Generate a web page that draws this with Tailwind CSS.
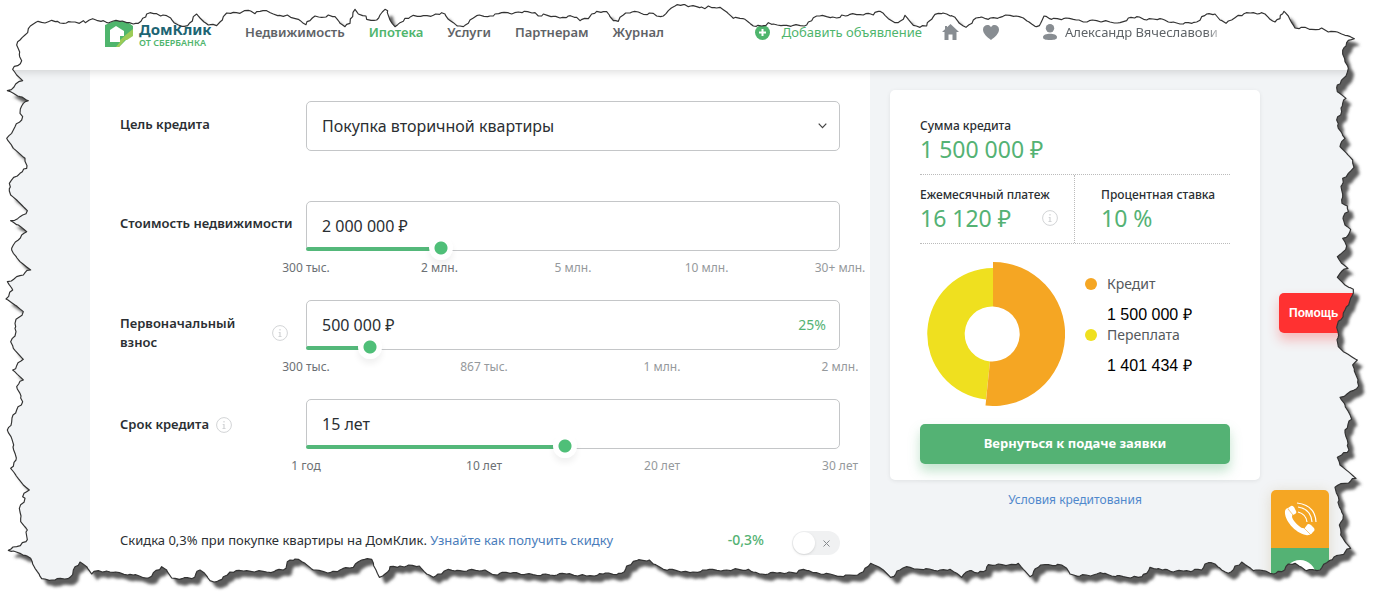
<!DOCTYPE html>
<html lang="ru">
<head>
<meta charset="utf-8">
<meta name="viewport" content="width=device-width, initial-scale=1">
<title>ДомКлик — Ипотечный калькулятор</title>
<script src="https://cdn.jsdelivr.net/npm/@tailwindcss/browser@4"></script>
</head>
<body class="relative min-h-screen overflow-hidden bg-[#f2f4f6] font-['Noto_Sans','Open_Sans',sans-serif] text-sm text-[#2b2f33]">

<header class="relative z-10 flex h-[70px] items-start bg-white pt-[22px] pr-[156px] pl-[105px] shadow-[0_2px_8px_rgba(0,0,0,0.14)]">
  <a href="#" class="-mt-px flex w-[140px] gap-[6px]" aria-label="ДомКлик от Сбербанка">
    <svg class="h-[27px] w-7" viewBox="0 0 28 27" aria-hidden="true">
      <path d="M0 4 9 0H21L28 5V14L22 18 14 26H0Z" fill="#4fb56d"/>
      <path d="M28 8V15L22 19 20 19 14 26H11L15 21V19L23 12Z" fill="#9ccb57"/>
      <path d="M5 21V9L11 5L19 10V15H15V21Z" fill="#fff"/>
    </svg>
    <span class="flex flex-col">
      <span class="text-[15px] leading-[16px] font-bold text-[#1d6473]">ДомКлик</span>
      <span class="pt-px text-[9px] leading-[10px] font-semibold whitespace-nowrap text-[#4fb56d]">ОТ СБЕРБАНКА</span>
    </span>
  </a>
  <nav class="flex gap-6 text-[13px] leading-5 font-semibold text-[#5f6367]">
    <a href="#">Недвижимость</a>
    <a href="#" class="text-[#4fb56d]">Ипотека</a>
    <a href="#">Услуги</a>
    <a href="#">Партнерам</a>
    <a href="#">Журнал</a>
  </nav>
  <div class="ml-auto flex items-center text-[13px] leading-5 text-[#5f6468]">
    <a href="#" class="flex items-center gap-3 text-[#4fb56d]">
      <svg class="size-[15px]" viewBox="0 0 15 15" aria-hidden="true"><circle cx="7.500" cy="7.500" r="7.500" fill="#4fb56d"/><path d="M7.500 4v7M4 7.500h7" stroke="#fff" stroke-width="2"/></svg>
      Добавить объявление
    </a>
    <a href="#" class="ml-5" aria-label="Главная"><svg class="h-4 w-[17px]" viewBox="0 0 17 16"><path d="M8.500 0 17 8H14.500V16H10.500V10.500H6.500V16H2.500V8H0L3 5.200V2H5V3.300Z" fill="#888d92"/></svg></a>
    <a href="#" class="ml-6" aria-label="Избранное"><svg class="h-[15px] w-4" viewBox="0 0 16 15"><path d="M8 15C4 12 0 8.500 0 4.500C0 0 6-1.500 8 2.200C10-1.500 16 0 16 4.500C16 8.500 12 12 8 15Z" fill="#888d92"/></svg></a>
    <a href="#" class="ml-11 flex items-center gap-2">
      <svg class="h-4 w-[14px]" viewBox="0 0 14 16" aria-hidden="true"><circle cx="7" cy="4.200" r="4.200" fill="#888d92"/><path d="M0 13C0 8.500 14 8.500 14 13C14 15.200 12 16 7 16S0 15.200 0 13Z" fill="#888d92"/></svg>
      <span class="w-40 whitespace-nowrap [mask-image:linear-gradient(to_right,#000_88%,transparent)]">Александр Вячеславови</span>
    </a>
  </div>
</header>

<main class="flex items-start gap-5 pr-[121px] pl-[90px]">
  <form class="min-w-0 flex-1 bg-white px-[30px] pt-[31px] pb-8">
    <div class="mb-[50px] flex h-[50px] items-center">
      <label for="goal" class="w-[186px] shrink-0 pb-[3px] text-[13px] font-semibold">Цель кредита</label>
      <div class="relative flex-1">
        <select id="goal" class="h-[50px] w-full appearance-none rounded-[5px] border border-[#c4c6c8] bg-white px-[15px] text-base">
          <option>Покупка вторичной квартиры</option>
        </select>
        <svg class="pointer-events-none absolute top-[22px] right-[13px] h-[6px] w-[9px]" viewBox="0 0 9 6" aria-hidden="true"><path d="M.7.700 4.500 4.700 8.300.700" fill="none" stroke="#444" stroke-width="1.200"/></svg>
      </div>
    </div>

    <div class="flex items-start">
      <label for="price" class="w-[186px] shrink-0 pt-[13px] text-[13px] leading-[19px] font-semibold whitespace-nowrap">Стоимость недвижимости</label>
      <div class="min-w-0 flex-1">
        <div class="relative">
          <input id="price" type="text" value="2 000 000 ₽" class="h-[50px] w-full rounded-[5px] border border-[#c4c6c8] bg-white px-[15px] text-base">
          <div class="absolute bottom-0 left-0 h-1 rounded-sm bg-[#54b87a]" style="width:25.3%"></div>
          <input type="range" min="0" max="100" step="any" value="25.3" aria-label="Стоимость недвижимости" class="absolute -right-3 -bottom-[9px] -left-3 h-6 appearance-none bg-transparent [&::-webkit-slider-thumb]:size-6 [&::-webkit-slider-thumb]:appearance-none [&::-webkit-slider-thumb]:rounded-full [&::-webkit-slider-thumb]:bg-[radial-gradient(circle,#4fbf78_6px,#fff_7px)] [&::-webkit-slider-thumb]:shadow-[0_5px_6px_rgba(0,0,0,0.06)]">
        </div>
        <div class="mt-[7px] mb-[22px] flex h-5 justify-between text-xs leading-5 text-[#95999c]">
          <span class="flex w-0 justify-center whitespace-nowrap text-[#6c7074]">300 тыс.</span>
          <span class="flex w-0 justify-center whitespace-nowrap text-[#6c7074]">2 млн.</span>
          <span class="flex w-0 justify-center whitespace-nowrap">5 млн.</span>
          <span class="flex w-0 justify-center whitespace-nowrap">10 млн.</span>
          <span class="flex w-0 justify-center whitespace-nowrap">30+ млн.</span>
        </div>
      </div>
    </div>

    <div class="flex items-start">
      <div class="flex w-[186px] shrink-0 items-center justify-between pt-[14px] pr-[18px]">
        <label for="down" class="text-[13px] leading-[19px] font-semibold">Первоначальный<br>взнос</label>
        <button type="button" aria-label="Подсказка о взносе"><svg class="size-4" viewBox="0 0 16 16"><circle cx="8" cy="8" r="7.400" fill="none" stroke="#d2d4d6"/><path d="M8 4v1.500M6.700 7.500H8V11.500M6.500 11.500h3" fill="none" stroke="#d2d4d6" stroke-width="1.200"/></svg></button>
      </div>
      <div class="min-w-0 flex-1">
        <div class="relative">
          <input id="down" type="text" value="500 000 ₽" class="h-[50px] w-full rounded-[5px] border border-[#c4c6c8] bg-white px-[15px] text-base">
          <span class="absolute top-[15px] right-[14px] leading-5 text-[#54b274]">25%</span>
          <div class="absolute bottom-0 left-0 h-1 rounded-sm bg-[#54b87a]" style="width:12%"></div>
          <input type="range" min="0" max="100" step="any" value="12" aria-label="Первоначальный взнос" class="absolute -right-3 -bottom-[9px] -left-3 h-6 appearance-none bg-transparent [&::-webkit-slider-thumb]:size-6 [&::-webkit-slider-thumb]:appearance-none [&::-webkit-slider-thumb]:rounded-full [&::-webkit-slider-thumb]:bg-[radial-gradient(circle,#4fbf78_6px,#fff_7px)] [&::-webkit-slider-thumb]:shadow-[0_5px_6px_rgba(0,0,0,0.06)]">
        </div>
        <div class="mt-[7px] mb-[22px] flex h-5 justify-between text-xs leading-5 text-[#95999c]">
          <span class="flex w-0 justify-center whitespace-nowrap text-[#6c7074]">300 тыс.</span>
          <span class="flex w-0 justify-center whitespace-nowrap">867 тыс.</span>
          <span class="flex w-0 justify-center whitespace-nowrap">1 млн.</span>
          <span class="flex w-0 justify-center whitespace-nowrap">2 млн.</span>
        </div>
      </div>
    </div>

    <div class="flex items-start">
      <div class="flex w-[186px] shrink-0 items-center gap-[7px] pt-4">
        <label for="term" class="text-[13px] leading-[19px] font-semibold">Срок кредита</label>
        <button type="button" aria-label="Подсказка о сроке"><svg class="size-4" viewBox="0 0 16 16"><circle cx="8" cy="8" r="7.400" fill="none" stroke="#d2d4d6"/><path d="M8 4v1.500M6.700 7.500H8V11.500M6.500 11.500h3" fill="none" stroke="#d2d4d6" stroke-width="1.200"/></svg></button>
      </div>
      <div class="min-w-0 flex-1">
        <div class="relative">
          <input id="term" type="text" value="15 лет" class="h-[50px] w-full rounded-[5px] border border-[#c4c6c8] bg-white px-[15px] text-base">
          <div class="absolute bottom-0 left-0 h-1 rounded-sm bg-[#54b87a]" style="width:48.5%"></div>
          <input type="range" min="0" max="100" step="any" value="48.5" aria-label="Срок кредита" class="absolute -right-3 -bottom-[9px] -left-3 h-6 appearance-none bg-transparent [&::-webkit-slider-thumb]:size-6 [&::-webkit-slider-thumb]:appearance-none [&::-webkit-slider-thumb]:rounded-full [&::-webkit-slider-thumb]:bg-[radial-gradient(circle,#4fbf78_6px,#fff_7px)] [&::-webkit-slider-thumb]:shadow-[0_5px_6px_rgba(0,0,0,0.06)]">
        </div>
        <div class="mt-[7px] flex h-5 justify-between text-xs leading-5 text-[#95999c]">
          <span class="flex w-0 justify-center whitespace-nowrap text-[#6c7074]">1 год</span>
          <span class="flex w-0 justify-center whitespace-nowrap text-[#6c7074]">10 лет</span>
          <span class="flex w-0 justify-center whitespace-nowrap">20 лет</span>
          <span class="flex w-0 justify-center whitespace-nowrap">30 лет</span>
        </div>
      </div>
    </div>

    <div class="mt-[54px] flex items-start">
      <label for="discount" class="flex-1 text-[13px] leading-5 whitespace-nowrap">Скидка 0,3% при покупке квартиры на ДомКлик. <a href="#" class="text-[#4a7dbb]">Узнайте как получить скидку</a></label>
      <span class="mr-7 font-medium text-[#54b274]">-0,3%</span>
      <span class="relative mt-px h-6 w-12">
        <input id="discount" type="checkbox" class="h-6 w-12 appearance-none rounded-full bg-[#f0f1f2]">
        <span class="pointer-events-none absolute top-px left-px size-[22px] rounded-full bg-white shadow-sm"></span>
        <svg class="pointer-events-none absolute top-[9px] right-[10px] size-[7px]" viewBox="0 0 7 7" aria-hidden="true"><path d="M.5.500 6.500 6.500M6.500.500.500 6.500" stroke="#85898c"/></svg>
      </span>
    </div>
  </form>

  <aside class="w-[370px] shrink-0 pt-5">
    <section class="rounded-[5px] bg-white px-[30px] pt-[27px] pb-4 shadow-[0_1px_4px_rgba(0,0,0,0.08)]">
      <div class="h-[57px]">
        <div class="text-xs leading-[18px] font-medium">Сумма кредита</div>
        <div class="text-[23px] leading-7 text-[#54b274]">1 500 000 ₽</div>
      </div>
      <div class="flex h-[70px] border-y border-dotted border-[#bbb]">
        <div class="flex w-1/2 border-r border-dotted border-[#bbb] pt-[11px]">
          <div class="flex-1">
            <div class="text-xs leading-[18px] font-medium whitespace-nowrap">Ежемесячный платеж</div>
            <div class="flex items-center justify-between pr-4">
              <span class="text-[23px] leading-7 text-[#54b274]">16 120 ₽</span>
              <button type="button" aria-label="Подсказка о платеже"><svg class="size-4" viewBox="0 0 16 16"><circle cx="8" cy="8" r="7.400" fill="none" stroke="#d2d4d6"/><path d="M8 4v1.500M6.700 7.500H8V11.500M6.500 11.500h3" fill="none" stroke="#d2d4d6" stroke-width="1.200"/></svg></button>
            </div>
          </div>
        </div>
        <div class="pt-[11px] pl-[26px]">
          <div class="text-xs leading-[18px] font-medium whitespace-nowrap">Процентная ставка</div>
          <div class="text-[23px] leading-7 text-[#54b274]">10 %</div>
        </div>
      </div>
      <div class="flex h-[180px] pt-[18px] pl-[6px]">
        <svg class="h-36 w-[139px] shrink-0" viewBox="0 0 139 144" role="img" aria-label="Кредит и переплата">
          <path d="M67 6A66 66 0 0 0 60 137.600L64 99.400A27.500 27.500 0 0 1 67 44.500Z" fill="#efe01f"/>
          <path d="M67 0A72 72 0 1 1 59.500 143.600L64 99.400A27.500 27.500 0 1 0 67 44.500Z" fill="#f5a623"/>
        </svg>
        <div class="flex flex-col pt-3 pl-5">
          <div class="flex h-[20px] items-center gap-[10px] text-[#55595d]"><i class="size-3 rounded-full bg-[#f5a623]"></i>Кредит</div>
          <div class="mt-[11px] pl-[22px] font-['Liberation_Sans',sans-serif] text-base leading-5 text-black">1 500 000 ₽</div>
          <div class="flex h-5 items-center gap-[10px] text-[#55595d]"><i class="size-3 rounded-full bg-[#efe01f]"></i>Переплата</div>
          <div class="mt-[11px] pl-[22px] font-['Liberation_Sans',sans-serif] text-base leading-5 text-black">1 401 434 ₽</div>
        </div>
      </div>
      <button type="button" class="h-10 w-full rounded-[5px] bg-[#54b274] pb-[2px] text-[13px] font-bold text-white shadow-[0_7px_12px_rgba(84,178,116,0.35)]">Вернуться к подаче заявки</button>
    </section>
    <a href="#" class="mt-[11px] block text-center text-xs leading-[18px] text-[#5088cc]">Условия кредитования</a>
  </aside>
</main>

<!-- Floating contact controls -->
<button type="button" class="absolute top-[293px] right-0 h-10 w-[102px] rounded-[5px] bg-[#ff3131] pl-[10px] text-left font-['Liberation_Sans',sans-serif] text-xs font-bold text-white shadow-[0_7px_12px_rgba(255,49,49,0.3)]">Помощь</button>
<div class="absolute top-[490px] right-[52px] flex w-[58px] flex-col overflow-hidden rounded-[5px] shadow-[0_2px_14px_rgba(160,120,40,0.2)]">
  <button type="button" aria-label="Позвонить" class="flex size-[58px] items-center justify-center bg-[#f5a623]">
    <svg class="size-[34px]" viewBox="0 0 34 34" fill="none">
      <path d="M2 9C1 18 12 31 23 33Q26 34 29 31L24 25Q20 28 16 24Q10 19 9 15Q9 13 10 12L5 6Q2 7 2 9Z" fill="#fff"/>
      <path d="M5 6 8 4Q9 3 11 5L13 9Q14 11 12 12L10 13ZM21 27 24 23Q25 21 28 23L31 26Q32 28 31 29L28 32Z" fill="#fff"/>
      <path d="M15 10Q23 12 24 20M15 5Q28 7 29 20M14 1Q32 3 33 20" stroke="#fff" stroke-width="1.200"/>
      <path d="M5 7 10 13M21 26 27 32" stroke="#f5a623" stroke-width=".6"/>
    </svg>
  </button>
  <button type="button" aria-label="Открыть чат" class="flex h-[50px] w-[58px] justify-center bg-[#54b274] pt-3"><span class="h-8 w-8 rounded-full bg-white"></span></button>
</div>

<!-- Torn paper edge with drop shadow -->
<svg class="pointer-events-none absolute inset-0 z-20 h-full w-full" viewBox="0 0 4143 1812" preserveAspectRatio="none" aria-hidden="true">
  <defs>
    <filter id="soft" x="-5%" y="-5%" width="110%" height="110%"><feGaussianBlur stdDeviation="5"/></filter>
    <clipPath id="outside"><path class="outer" clip-rule="evenodd"/></clipPath>
  </defs>
  <path class="outer" fill="#fff" fill-rule="evenodd"/>
  <g clip-path="url(#outside)"><path class="edge" fill="#5c5c5c" transform="translate(17 19)" filter="url(#soft)"/></g>
  <path class="edge" fill="none" stroke="#333" stroke-width="3.500" stroke-linejoin="round"/>
</svg>
<script>
// Each run of the torn outline: origin x, origin y, then its points.
const runs = [
  [0,0,"108,67 125,67 135,69 155,61 172,64 180,69 205,65 215,66 238,70 250,62 256,68 268,60 278,56 290,61 310,62 325,69 340,63 360,64 380,68 400,72 415,70 428,55 440,42 450,38 470,41 482,48 500,47 512,54 522,68 535,75 553,79 568,70 580,50 590,42 600,54 612,66 625,75 650,77 660,66 670,50 680,39 700,37 725,37 745,31 765,41 780,34 800,32 820,42 850,49 862,45 872,52 895,58 910,70 918,74 930,62 945,48 965,52 985,45 1005,50 1020,70 1035,80 1050,70 1058,50 1065,28 1075,42 1098,48 1100,58 1130,60 1140,45 1155,28 1163,32 1170,60 1185,80 1200,68 1215,55 1240,46 1270,47 1300,46 1325,38 1335,42 1345,58 1360,68 1372,78"],
  [1380,0,"0,78 15,76 30,60 50,47 100,48 125,38 155,42 175,36 225,38 235,48 250,42 300,54 325,48 350,52 360,62 385,56 395,42 410,34 440,35 450,50 460,62 475,64 490,45 510,39 535,36 550,43 580,40 590,48 610,48 625,32 645,18 670,14 685,20 710,20 735,26 745,18 770,24 780,22 800,36 820,55 850,56 865,66 880,78 905,78 925,68 940,72 970,76 1000,76 1040,75 1055,62 1070,48 1100,50 1130,54 1145,45 1190,44 1225,40 1240,45 1255,34 1270,40 1285,56 1305,68 1320,64 1335,46 1345,58 1360,76 1380,82"],
  [2760,0,"20,78 35,58 55,40 80,42 105,52 118,70 138,82 160,60 180,52 205,58 240,52 270,46 310,54 335,72 350,80 362,70 372,48 395,58 430,56 460,58 490,66 530,62 570,66 600,68 625,54 650,50 680,60 720,56 745,66 780,72 805,68 830,66 845,50 860,42 885,42 900,60 918,70 935,60 955,46 1000,38 1035,42 1050,58 1065,66 1080,56 1092,34 1105,48 1115,68 1125,84 1155,82 1175,88 1205,84 1225,96 1245,95 1275,106 1303,116 1280,128 1268,162 1275,185 1285,205 1270,235 1252,255 1252,275 1278,295 1268,310 1265,335 1250,360 1255,385 1275,415"],
  [3690,420,"335,5 330,20 350,40 368,60 372,82 355,100 338,115 335,150 336,190 352,198 355,215 340,230 345,255 362,268 355,285 338,295 350,318 340,335 322,350 335,370 354,385 330,400 322,412 345,435 370,448 362,475 345,510 322,555 325,620 340,635 382,660 368,675 378,705 386,738 360,755 330,772 345,795 365,838 345,870 352,900"],
  [2760,1320,"1287,30 1265,45 1252,52 1260,75 1285,95 1308,115 1275,130 1245,142 1255,170 1258,200 1270,225 1258,255 1262,285 1275,305 1292,325 1260,345 1228,362 1200,390 1160,392 1145,382 1125,370 1105,372 1085,395 1050,400 1030,392 1000,392 985,380 965,366 945,378 925,400 905,390 885,372 865,368 845,390 800,392 760,396 735,388 715,386 690,382 680,400 655,412 610,410 575,408 540,398 520,405 480,408 450,402 440,385 425,375 375,374 355,382 330,410 310,388 295,370 265,375 235,372 205,374 190,395 165,398 150,392 125,412 110,400 90,388 60,390 0,388"],
  [1380,1320,"1340,380 1320,390 1292,412 1270,390 1250,378 1232,370 1215,385 1200,400 1150,410 1110,402 1060,398 1030,388 1010,400 960,398 905,402 880,396 865,388 800,390 740,390 690,398 650,392 610,388 580,372 568,360 520,364 500,378 485,400 430,402 380,408 320,402 230,406 160,398 120,400 100,404 75,390 0,392"],
  [0,1110,"1345,598 1325,612 1300,622 1280,612 1258,588 1200,588 1170,590 1155,612 1138,622 1128,600 1115,568 1085,570 1060,592 1020,600 990,608 940,600 915,580 895,568 870,570 850,600 800,606 740,602 690,606 670,620 650,635 630,632 612,608 600,600 575,626 515,624 500,600 485,590 460,608 445,624 400,615 330,606 295,602 275,612 260,590 240,576 220,600 210,622 165,630 125,626 105,595 92,565 60,550 25,541 50,530 78,515 82,480 62,455 58,415 75,385 68,380 88,360 70,345 32,295 48,270 38,215 22,180 50,120 68,95 60,70 50,50 70,30"],
  [0,450,"38,660 70,628 40,595 32,575 48,545 45,520 70,485 45,465 18,447 38,420 22,395 50,380 92,360 60,335 40,310 35,295 55,270 80,245 55,225 32,212 60,200 82,182 50,150 32,135 28,100 60,70 80,55 75,25"],
  [0,0,"40,445 20,415 45,380 68,350 60,340 70,310 85,302 60,290 22,272 68,242 50,225 38,208 65,182 50,135 60,120 75,105 100,72"]
];
const points = runs.flatMap(([ox, oy, list]) => list.split(" ").map(p => {
  const [x, y] = p.split(",").map(Number);
  return [x + ox, y + oy];
}));
// Roughen long stretches so that the edge looks like torn paper.
const rough = points.flatMap(([x, y], i) => {
  const [nx, ny] = points[(i + 1) % points.length];
  const n = Math.max(1, Math.round(Math.hypot(nx - x, ny - y) / 10));
  return Array.from({ length: n }, (_, k) => {
    const j = k ? 3 * Math.sin(i * 7 + k * 5) : 0;
    return [Math.round(x + (nx - x) * k / n + j), Math.round(y + (ny - y) * k / n + j)];
  });
});
const edge = "M" + rough.map(p => p.join(" ")).join("L") + "Z";
document.querySelectorAll(".edge").forEach(p => p.setAttribute("d", edge));
document.querySelectorAll(".outer").forEach(p => p.setAttribute("d", "M-9-9H4160V1830H-9Z" + edge));
</script>
</body>
</html>
